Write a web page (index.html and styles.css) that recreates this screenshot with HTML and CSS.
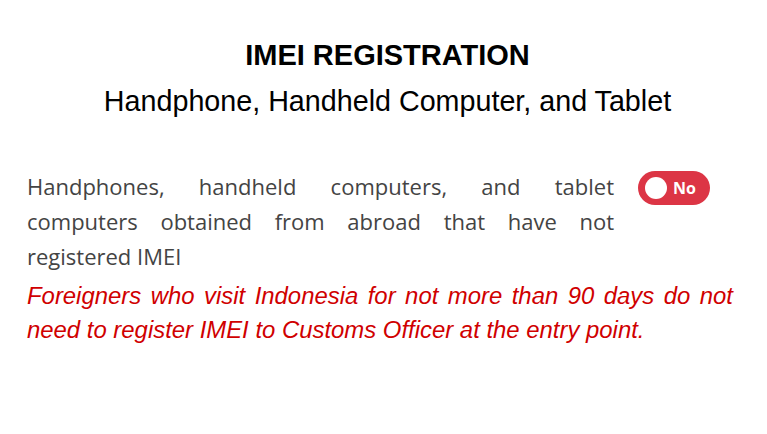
FILE: index.html
```html
<!DOCTYPE html>
<html lang="en">
  <head>
    <meta charset="UTF-8" />
    <meta name="viewport" content="width=device-width, initial-scale=1.0" />
    <title>IMEI Registration</title>
    <link rel="stylesheet" href="styles.css">
  </head>
  <body>
    <div class="page">
      <div class="heading">
        <h1 class="title">IMEI REGISTRATION</h1>
        <h2 class="subtitle">Handphone, Handheld Computer, and Tablet</h2>
      </div>

      <div class="question">
        <p class="question-text">
          Handphones, handheld computers, and tablet computers obtained from abroad that have not registered IMEI
        </p>
        <label class="toggle">
          <span class="knob"></span>
          <span class="toggle-label">No</span>
        </label>
      </div>

      <p class="note">
        Foreigners who visit Indonesia for not more than 90 days do not need to register IMEI to Customs Officer at the entry point.
      </p>
    </div>
  </body>
</html>
```

FILE: styles.css
```css
body {
  margin: 0;
  background: #fff;
  font-family: "Open Sans", sans-serif;
}
.page {
  padding: 36px 34px 0 27px;
}
.heading {
  padding-left: 15px;
  text-align: center;
  font-family: "Liberation Sans", Arial, sans-serif;
  color: #000;
}
.title {
  margin: 0;
  font-size: 29px;
  font-weight: bold;
  line-height: 38px;
}
.subtitle {
  margin: 10px 0 0;
  font-size: 28.7px;
  font-weight: normal;
  line-height: 34px;
}
.question {
  display: flex;
  align-items: flex-start;
  gap: 24px;
  margin-top: 51px;
}
.question-text {
  flex: 0 0 587px;
  margin: 0;
  font-size: 22px;
  line-height: 35px;
  text-align: justify;
  color: #444;
}
.toggle {
  display: flex;
  align-items: center;
  gap: 6px;
  width: 72px;
  height: 34px;
  margin-top: 2px;
  padding: 0 7px;
  box-sizing: border-box;
  border-radius: 17px;
  background-color: #dc3545;
  cursor: pointer;
}
.knob {
  width: 22px;
  height: 22px;
  border-radius: 50%;
  background: #fff;
}
.toggle-label {
  font-family: "Open Sans", sans-serif;
  font-size: 16px;
  font-weight: bold;
  color: #fff;
}
.note {
  margin: 5px 0 0;
  font-family: "Liberation Sans", Arial, sans-serif;
  font-size: 23.9px;
  font-style: italic;
  line-height: 34px;
  text-align: justify;
  color: #d00000;
}
```
